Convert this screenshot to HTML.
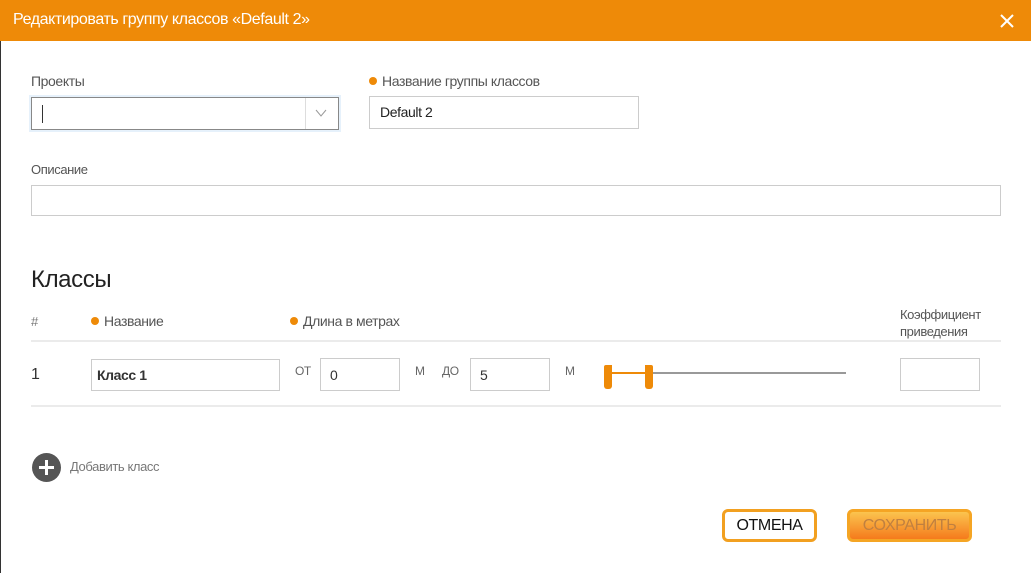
<!DOCTYPE html>
<html><head><meta charset="utf-8"><style>
*{box-sizing:border-box;margin:0;padding:0}
body{width:1031px;height:573px;overflow:hidden;background:#fff;font-family:"Liberation Sans",sans-serif;color:#444;position:relative;letter-spacing:-0.4px}
.a{position:absolute;white-space:nowrap}
.hdr{position:absolute;left:0;top:0;width:1031px;height:41px;background:#ee8a08}
.inp{position:absolute;border:1px solid #ccc;background:#fff}
.dot{display:inline-block;width:8px;height:8px;border-radius:50%;background:#ee8a08;margin-right:5px;vertical-align:1px}
.lbl{font-size:14px;color:#555}
.hr{position:absolute;left:31px;width:970px;height:2px;background:#ebebeb}
</style></head><body>
<div class="hdr"></div>
<div class="a" style="left:13px;top:11px;font-size:16px;color:#fff">Редактировать группу классов «Default 2»</div>
<svg class="a" style="left:999px;top:13px" width="16" height="16"><path d="M2 2L14 14M14 2L2 14" stroke="#fff" stroke-width="2"/></svg>
<div class="a" style="left:0;top:41px;width:1px;height:532px;background:#333"></div>

<div class="a lbl" style="left:31px;top:73px">Проекты</div>
<div class="a" style="left:29px;top:95px;width:312px;height:37px;background:#e6f1fb"></div>
<div class="inp" style="left:31px;top:97px;width:308px;height:33px;border-color:#888"></div>
<div class="a" style="left:42px;top:105px;width:1px;height:18px;background:#333"></div>
<div class="a" style="left:305px;top:98px;width:1px;height:31px;background:#ddd"></div>
<svg class="a" style="left:315px;top:108px" width="12" height="10"><path d="M1 2L6 8L11 2" stroke="#999" fill="none"/></svg>

<div class="a lbl" style="left:369px;top:73px"><span class="dot"></span>Название группы классов</div>
<div class="inp" style="left:369px;top:96px;width:270px;height:33px"></div>
<div class="a" style="left:380px;top:104px;font-size:14px;color:#222">Default 2</div>

<div class="a lbl" style="left:31px;top:162px;font-size:13px">Описание</div>
<div class="inp" style="left:31px;top:185px;width:970px;height:31px"></div>

<div class="a" style="left:31px;top:266px;font-size:24px;color:#222">Классы</div>
<div class="a lbl" style="left:31px;top:314px;font-size:13px;color:#777">#</div>
<div class="a lbl" style="left:91px;top:313px"><span class="dot"></span>Название</div>
<div class="a lbl" style="left:290px;top:313px"><span class="dot"></span>Длина в метрах</div>
<div class="a lbl" style="left:900px;top:306px;font-size:13px;line-height:17px">Коэффициент<br>приведения</div>
<div class="hr" style="top:340px"></div>

<div class="a" style="left:31px;top:366px;font-size:16px;color:#333">1</div>
<div class="inp" style="left:91px;top:359px;width:189px;height:32px"></div>
<div class="a" style="left:97px;top:367px;font-size:14px;font-weight:bold;color:#333">Класс 1</div>
<div class="a" style="left:295px;top:364px;font-size:12px;color:#666">ОТ</div>
<div class="inp" style="left:320px;top:358px;width:80px;height:33px"></div>
<div class="a" style="left:330px;top:367px;font-size:14px;color:#333">0</div>
<div class="a" style="left:415px;top:364px;font-size:12px;color:#666">М</div>
<div class="a" style="left:442px;top:364px;font-size:12px;color:#666">ДО</div>
<div class="inp" style="left:470px;top:358px;width:80px;height:33px"></div>
<div class="a" style="left:480px;top:367px;font-size:14px;color:#333">5</div>
<div class="a" style="left:565px;top:364px;font-size:12px;color:#666">М</div>
<div class="a" style="left:650px;top:372px;width:196px;height:2px;background:#999"></div>
<div class="a" style="left:608px;top:372px;width:44px;height:2px;background:#ee8a08"></div>
<div class="a" style="left:604px;top:365px;width:8px;height:24px;background:#ee8a08;border-radius:2px 0 3px 3px"></div>
<div class="a" style="left:645px;top:365px;width:8px;height:24px;background:#ee8a08;border-radius:0 2px 3px 3px"></div>
<div class="inp" style="left:900px;top:358px;width:80px;height:33px"></div>
<div class="hr" style="top:405px"></div>

<div class="a" style="left:32px;top:453px;width:29px;height:29px;border-radius:50%;background:#555"></div>
<svg class="a" style="left:32px;top:453px" width="29" height="29"><path d="M14.5 7V22M7 14.5H22" stroke="#fff" stroke-width="3"/></svg>
<div class="a" style="left:70px;top:459px;font-size:13px;color:#777">Добавить класс</div>

<div class="a" style="left:722px;top:509px;width:95px;height:33px;border:3px solid #f2a020;border-radius:6px;background:#fff;font-size:16px;color:#111;text-align:center;line-height:27px">ОТМЕНА</div>
<div class="a" style="left:847px;top:509px;width:125px;height:33px;border:3px solid #f5a524;border-radius:6px;background:linear-gradient(#fbc44f,#f57a1c);font-size:16px;color:#c08040;text-align:center;line-height:27px">СОХРАНИТЬ</div>
</body></html>
